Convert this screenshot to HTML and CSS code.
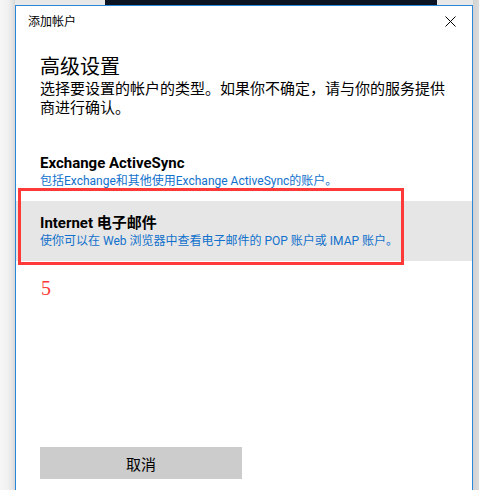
FILE: index.html
```html
<!DOCTYPE html>
<html lang="zh-CN">
<head>
<meta charset="utf-8">
<title>添加帐户</title>
<link rel="stylesheet" href="styles.css">
</head>
<body>
<div class="screen">
  <div class="gutter-left"></div>
  <div class="dialog">
    <div class="titlebar">
      <span class="title">添加帐户</span>
      <svg class="close" width="11" height="11" viewBox="0 0 11 11" aria-label="关闭">
        <path d="M0.5 0.5 L10.5 10.5 M10.5 0.5 L0.5 10.5" stroke="#000" stroke-width="1" fill="none"/>
      </svg>
    </div>
    <div class="content">
      <h1 class="heading">高级设置</h1>
      <p class="desc">选择要设置的帐户的类型。如果你不确定，请与你的服务提供<br>商进行确认。</p>
    </div>
    <div class="options">
      <div class="option">
        <div class="opt-title">Exchange ActiveSync</div>
        <div class="opt-sub">包括Exchange和其他使用Exchange ActiveSync的账户。</div>
      </div>
      <div class="option selected">
        <div class="opt-title">Internet 电子邮件</div>
        <div class="opt-sub">使你可以在 Web 浏览器中查看电子邮件的 POP 账户或 IMAP 账户。</div>
      </div>
    </div>
    <div class="footer">
      <button class="btn">取消</button>
    </div>
  </div>
  <div class="gutter-right"></div>
  <div class="mark-box"></div>
  <div class="mark-num">5</div>
</div>
</body>
</html>
```
FILE: styles.css
```css
html, body {
  margin: 0;
  padding: 0;
}
body {
  font-family: "Noto Sans", "Noto Sans CJK SC", sans-serif;
  color: #000;
  overflow: hidden;
}
.screen {
  position: relative;
  display: flex;
  align-items: flex-start;
  width: 479px;
  height: 490px;
  overflow: hidden;
  background:
    linear-gradient(#0c1424, #0c1424) 105px 0 / 332px 5px no-repeat,
    #e8e8e8;
}
.gutter-left {
  width: 15px;
  height: 490px;
  flex: none;
  background: linear-gradient(to right, #f6f6f6 0, #f1f1f1 8px, #e2e2e2 13px, #d6d6d6 15px);
}
.gutter-right {
  flex: 1;
  height: 490px;
  background: linear-gradient(to right, #d2d2d2, #dcdcdc);
}
.dialog {
  flex: none;
  box-sizing: border-box;
  width: 458px;
  margin-top: 5px;
  height: 520px;
  background: #fff;
  border: 1px solid #2b87d8;
}
.titlebar {
  display: flex;
  justify-content: space-between;
  align-items: flex-start;
  height: 32px;
  box-sizing: border-box;
  padding: 8px 16px 0 12px;
}
.title {
  font-size: 12px;
  line-height: 16px;
}
.close {
  margin-top: 2px;
  display: block;
}
.content {
  padding: 16px 24px 0 24px;
}
.heading {
  margin: 0;
  font-size: 20px;
  line-height: 25px;
  font-weight: normal;
}
.desc {
  margin: 0;
  font-size: 15px;
  line-height: 19px;
}
.options {
  margin-top: 24px;
}
.option {
  padding: 12px 24px;
  height: 60px;
  box-sizing: border-box;
}
.option.selected {
  background: #e6e6e6;
}
.opt-title {
  font-family: "Roboto", "Noto Sans CJK SC", sans-serif;
  font-size: 15px;
  line-height: 20px;
  font-weight: 700;
}
.opt-sub {
  font-family: "Roboto", "Noto Sans CJK SC", sans-serif;
  font-size: 12px;
  line-height: 16px;
  color: #1171cc;
}
.footer {
  padding: 186px 24px 0 24px;
}
.btn {
  display: block;
  width: 202px;
  height: 32px;
  border: none;
  margin: 0;
  padding: 0;
  background: #cccccc;
  font-family: "Noto Sans CJK SC", sans-serif;
  font-size: 15px;
  color: #000;
}
.mark-box {
  position: absolute;
  left: 18px;
  top: 188px;
  width: 386px;
  height: 77px;
  box-sizing: border-box;
  border: 3px solid #ff3838;
}
.mark-num {
  position: absolute;
  left: 41px;
  top: 277px;
  font-family: "Liberation Serif", serif;
  font-size: 20px;
  line-height: 22px;
  color: #ff3838;
}
```
